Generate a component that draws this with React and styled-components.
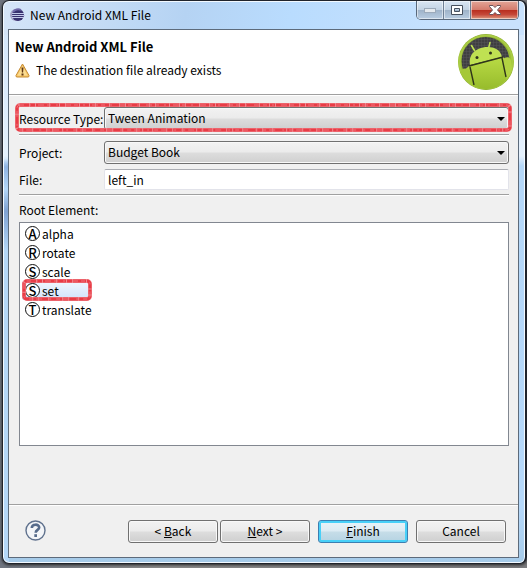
import React, { useState } from "react";
import styled, { createGlobalStyle, css } from "styled-components";

const GlobalStyle = createGlobalStyle`
  * {
    box-sizing: border-box;
  }

  body {
    margin: 0;
    background: linear-gradient(to right, #6f7580, #8b8b8b 30%, #7b7b7e);
    color: #000;
    font-family: "Noto Sans CJK KR", "Open Sans", sans-serif;
    font-size: 12px;
    line-height: 18px;
  }

  button,
  input,
  select {
    font: inherit;
    color: inherit;
  }
`;

const Page = styled.div`
  min-height: 100vh;
  padding: 0 0 4px 2px;
  display: flex;
`;

const Window = styled.div`
  flex: 1;
  min-width: 0;
  display: flex;
  flex-direction: column;
  padding: 0 6px 5px 5px;
  border: 1px solid #20242c;
  border-right-width: 2px;
  border-radius: 7px;
  background:
    linear-gradient(
      to bottom,
      transparent 158px,
      #8fb3e2 166px,
      #b4d7f8 188px,
      #7fa2d2 210px,
      #b4d7f8 250px
    ) 0 0 / 6px 100% no-repeat,
    linear-gradient(100deg, #d5e5f8 0, #b5d3f3 35%, #b9dcfe 55%, #c9e2fd 90%) 0 0 / 100% 34px no-repeat,
    linear-gradient(to bottom, #cfe4fb 0, #e4f0fc 155px, #b4d7f8 165px, #b5d8fa 90%, #a6cbe9 100%);
  box-shadow:
    inset 0 0 0 1px #f2f9ff,
    0 1px 3px #222;
`;

const TitleBar = styled.div`
  height: 28px;
  flex: none;
  display: flex;
  align-items: center;
  gap: 5px;
  padding-left: 2px;
`;

const Title = styled.h1`
  flex: 1;
  margin: 0;
  font-size: 12px;
  font-weight: 400;
  white-space: nowrap;
`;

const WindowButtons = styled.div`
  align-self: flex-start;
  display: flex;
  height: 19px;
  border: 1px solid #59687b;
  border-top: 0;
  border-radius: 0 0 5px 5px;
  overflow: hidden;
`;

const WindowButton = styled.button`
  width: ${({ $wide }) => ($wide ? "47px" : "27px")};
  display: flex;
  align-items: center;
  justify-content: center;
  padding: 0;
  border: 0;
  border-right: ${({ $wide }) => ($wide ? "0" : "1px solid #6e7f94")};
  background: ${({ $wide }) =>
    $wide
      ? "linear-gradient(#e3a698 0, #d57c6d 48%, #b92f20 52%, #c54839 75%, #de9a80 100%)"
      : "linear-gradient(#d9e6f3 0, #c3d3e4 48%, #9fb3c9 52%, #b9cde2 100%)"};
  box-shadow: inset 0 0 0 1px rgba(255, 255, 255, 0.5);
`;

const Client = styled.form`
  flex: 1;
  display: flex;
  flex-direction: column;
  border: 1px solid #5d6b7b;
  background: #f0f0f0;
`;

const Header = styled.header`
  height: 65px;
  display: flex;
  justify-content: space-between;
  padding: 3px 3px 0 6px;
  border-bottom: 1px solid #a0a0a0;
  box-shadow: 0 1px 0 #fff;
  background: #fff;
`;

const HeaderText = styled.div`
  padding-top: 5px;
`;

const Heading = styled.h2`
  margin: 0 0 5px;
  font-size: 13px;
  line-height: 18px;
  font-weight: 700;
`;

const Message = styled.p`
  display: flex;
  align-items: center;
  gap: 6px;
  margin: 0;
`;

const Body = styled.div`
  flex: 1;
  display: flex;
  flex-direction: column;
  padding: 12px 9px 58px 10px;
`;

const Field = styled.div`
  position: relative;
  display: grid;
  grid-template-columns: 85px 1fr;
  align-items: center;
  white-space: nowrap;
`;

const Separator = styled.hr`
  width: 100%;
  height: 2px;
  margin: 4px 0 5px;
  border: 0;
  border-top: 1px solid #a0a0a0;
  border-bottom: 1px solid #fff;
`;

const SelectBox = styled.div`
  position: relative;

  svg {
    position: absolute;
    right: 4px;
    top: 10px;
    pointer-events: none;
  }
`;

const Select = styled.select`
  display: block;
  width: 100%;
  height: 23px;
  padding: 0 20px 1px 3px;
  appearance: none;
  border: 1px solid #707070;
  border-radius: 3px;
  background: linear-gradient(#f2f2f2 0, #ebebeb 48%, #dddddd 52%, #cfcfcf 100%);
  box-shadow: inset 0 0 0 1px #f8f8f8;
`;

const TextInput = styled.input`
  width: 100%;
  height: 21px;
  padding: 0 3px;
  border: 1px solid #e2e3ea;
  border-top-color: #abadb3;
  border-radius: 2px;
  background: #fff;
`;

const Gap = styled.div`
  height: 5px;
`;

const ListLabel = styled.span`
  margin-bottom: 3px;
`;

const List = styled.ul`
  flex: 1;
  margin: 0;
  padding: 1px 2px;
  list-style: none;
  border: 1px solid #828790;
  background: #fff;
`;

const Item = styled.li`
  display: flex;
`;

const ItemButton = styled.button`
  position: relative;
  display: flex;
  align-items: center;
  gap: 2px;
  height: 19px;
  min-width: 68px;
  padding: 0 2px;
  border: 1px solid transparent;
  border-radius: 2px;
  background: transparent;
  line-height: 17px;

  ${({ $selected }) =>
    $selected &&
    css`
      border-color: #a8c6ea;
      background: linear-gradient(#eff6fe, #d2e4fb);
    `}
`;

const LetterIcon = styled.span`
  width: 15px;
  height: 15px;
  display: flex;
  align-items: center;
  justify-content: center;
  border: 1px solid #111;
  border-radius: 50%;
  background: #fff;
  font-size: 13px;
  font-weight: 500;
  line-height: 13px;
`;

const Marker = styled.svg`
  position: absolute;
  top: ${({ $wide }) => ($wide ? "-4px" : "-3px")};
  left: ${({ $wide }) => ($wide ? "-4px" : "-1px")};
  width: calc(100% + ${({ $wide }) => ($wide ? "7px" : "4px")});
  height: calc(100% + ${({ $wide }) => ($wide ? "6px" : "5px")});
  overflow: visible;
  pointer-events: none;

  rect {
    x: 2px;
    y: 2px;
    width: calc(100% - 4px);
    height: calc(100% - 4px);
    fill: none;
  }
`;

const Footer = styled.footer`
  height: 53px;
  display: flex;
  align-items: center;
  padding: 0 12px 0 16px;
  border-top: 1px solid #a0a0a0;
  box-shadow: inset 0 1px 0 #fff;
`;

const HelpButton = styled.button`
  display: flex;
  margin-right: auto;
  padding: 0 0 2px;
  border: 0;
  background: none;
`;

const ButtonPair = styled.div`
  display: flex;
  gap: 2px;
`;

const ButtonRow = styled.div`
  display: flex;
  gap: 8px;
`;

const Button = styled.button`
  width: 90px;
  height: 23px;
  padding: 0;
  border: 1px solid ${({ $primary }) => ($primary ? "#3c7fb1" : "#707070")};
  border-radius: 3px;
  line-height: 20px;
  background: ${({ $primary }) =>
    $primary
      ? "linear-gradient(#e9f3f9 0, #dcebf3 48%, #c6dde8 52%, #b5d3e2 100%)"
      : "linear-gradient(#f2f2f2 0, #ebebeb 48%, #dddddd 52%, #cfcfcf 100%)"};
  box-shadow: inset 0 0 0 ${({ $primary }) => ($primary ? "2px #48d0f8" : "1px #f8f8f8")};
`;

const EclipseIcon = () => (
  <svg width="15" height="14" viewBox="0 0 15 14" aria-hidden="true">
    <circle cx="6" cy="7" r="6" fill="#a6a3c8" />
    <circle cx="8" cy="7" r="6" fill="#38306f" />
    <path d="M3 4a6 6 0 0 1 8-2" stroke="#6f68a8" strokeWidth="2" fill="none" />
    <path d="M2 5.5h12M2 7.5h13M2 9.5h12" stroke="#c3c8ea" strokeWidth="1" />
  </svg>
);

const WarningIcon = () => (
  <svg width="15" height="15" viewBox="0 0 15 15" aria-hidden="true">
    <path
      d="M7.5 1 14 12.5q.3 1.5-1 1.5H2q-1.3 0-1-1.5Z"
      fill="#f8c766"
      stroke="#c58a32"
      strokeLinejoin="round"
    />
    <path d="M7.5 3 12.5 12.5h-10Z" fill="#fbdc91" />
    <path d="M6.5 4.5h2l-.4 5H6.9ZM6.5 10.5h2v2h-2z" fill="#5f3512" />
  </svg>
);

const AndroidBadge = () => (
  <svg width="58" height="58" viewBox="0 0 58 58" aria-hidden="true">
    <defs>
      <linearGradient id="rim" x1="0" y1="0" x2="0" y2="1">
        <stop offset="0" stopColor="#88a72c" />
        <stop offset="0.5" stopColor="#a0c534" />
        <stop offset="1" stopColor="#7d9e22" />
      </linearGradient>
      <linearGradient id="robot" x1="0" y1="0" x2="0" y2="1">
        <stop offset="0" stopColor="#b9db45" />
        <stop offset="1" stopColor="#93b829" />
      </linearGradient>
      <pattern id="mesh" width="3" height="3" patternUnits="userSpaceOnUse">
        <rect width="3" height="3" fill="#3f3f41" />
        <path d="M0 0h3M0 0v3" stroke="#555557" strokeWidth="1" />
      </pattern>
      <clipPath id="disc">
        <circle cx="29" cy="29" r="27" />
      </clipPath>
    </defs>
    <circle cx="29" cy="29" r="28" fill="url(#rim)" />
    <circle cx="29" cy="29" r="26.5" fill="none" stroke="#a9cb45" strokeWidth="2" />
    <circle cx="28.500" cy="28" r="24" fill="url(#mesh)" />
    <g clipPath="url(#disc)">
      <path d="M12 33 46 24 54 34 56 60H2V42Z" fill="url(#robot)" />
      <path d="M13 32C11 22 18 16 26 14.500S43 15 45 24Z" fill="#bfe152" />
      <path
        d="m14.500 12.500 3 5M33 9.500l-1.500 6"
        stroke="#bfe152"
        strokeWidth="1.600"
        strokeLinecap="round"
      />
      <path d="M4 39q0-3.500 4-3.500t5 3L17 60H4Z" fill="#a5c838" />
      <path d="M46 29q-1-3.500 3-4.500t5 3L57 48l-6 4Z" fill="#b2d342" />
      <path d="m12 33 34-9M13 34l4 18M45 25l4 19" stroke="#2f351a" strokeWidth="1.400" />
      <path d="M4 42c4 10 14 15 25 15s21-5 25-15" stroke="#89ac27" strokeWidth="2" fill="none" />
    </g>
    <circle cx="20" cy="24.500" r="1.500" fill="#30351c" />
    <circle cx="33.500" cy="20" r="1.500" fill="#30351c" />
  </svg>
);

const Arrow = () => (
  <svg width="8" height="4" viewBox="0 0 8 4" aria-hidden="true">
    <path d="M0 0h8L4 4Z" />
  </svg>
);

const HelpIcon = () => (
  <svg width="21" height="21" viewBox="0 0 21 21" aria-hidden="true">
    <circle cx="10.5" cy="10.5" r="9.5" fill="#f3f5f8" stroke="#5f718d" strokeWidth="1.4" />
    <path
      d="M6.800 8c0-4.500 7.400-4.200 7.400-.5 0 2.500-3.500 2.300-3.500 5.200"
      fill="none"
      stroke="#566b8b"
      strokeWidth="2.6"
    />
    <path d="M9.300 14.200H12V17H9.300z" fill="#566b8b" />
  </svg>
);

// Rough felt-pen outline around a control
const Highlight = ({ wide }) => (
  <Marker $wide={wide} aria-hidden="true">
    <rect rx="3" stroke="#f08a90" strokeWidth="4" />
    <rect rx="3" stroke="#e83c46" strokeWidth="3" strokeDasharray="9 1 5 1 13 1" />
    <rect rx="3" stroke="#f0737a" strokeWidth="1" strokeDasharray="4 5 2 7 6 3" />
  </Marker>
);

const elements = ["alpha", "rotate", "scale", "set", "translate"];

const App = () => {
  const [selected, setSelected] = useState("set");
  const [fileName, setFileName] = useState("left_in");

  return (
    <Page>
      <GlobalStyle />
      <Window>
        <TitleBar>
          <EclipseIcon />
          <Title>New Android XML File</Title>
          <WindowButtons>
            <WindowButton type="button" aria-label="Minimize">
              <svg width="12" height="5">
                <rect x="0.5" y="0.5" width="11" height="4" fill="#e4e9ee" stroke="#9caaba" />
              </svg>
            </WindowButton>
            <WindowButton type="button" aria-label="Maximize">
              <svg width="12" height="10">
                <path
                  d="M.5.5h11v9H.5ZM3.5 3.5h5v3h-5Z"
                  fill="#fff"
                  fillRule="evenodd"
                  stroke="#47505e"
                />
              </svg>
            </WindowButton>
            <WindowButton type="button" aria-label="Close" $wide>
              <svg width="12" height="10" viewBox="0 0 12 10">
                <path
                  d="M.5.5h3.500L6 2.500 8 .5h3.500v1L8.500 5l3 3.500v1H8L6 7.500 4 9.500H.5v-1l3-3.500-3-3.500Z"
                  fill="#fff"
                  stroke="#6b5358"
                />
              </svg>
            </WindowButton>
          </WindowButtons>
        </TitleBar>

        <Client onSubmit={(e) => e.preventDefault()}>
          <Header>
            <HeaderText>
              <Heading>New Android XML File</Heading>
              <Message>
                <WarningIcon />
                The destination file already exists
              </Message>
            </HeaderText>
            <AndroidBadge />
          </Header>

          <Body>
            <Field>
              <label htmlFor="resource-type">Resource Type:</label>
              <SelectBox>
                <Select id="resource-type">
                  <option>Tween Animation</option>
                </Select>
                <Arrow />
              </SelectBox>
              <Highlight wide />
            </Field>
            <Separator />
            <Field>
              <label htmlFor="project">Project:</label>
              <SelectBox>
                <Select id="project">
                  <option>Budget Book</option>
                </Select>
                <Arrow />
              </SelectBox>
            </Field>
            <Gap />
            <Field>
              <label htmlFor="file">File:</label>
              <TextInput
                id="file"
                value={fileName}
                onChange={(e) => setFileName(e.target.value)}
              />
            </Field>
            <Separator />
            <ListLabel id="root-element">Root Element:</ListLabel>
            <List aria-labelledby="root-element">
              {elements.map((name) => (
                <Item key={name}>
                  <ItemButton
                    type="button"
                    $selected={name === selected}
                    aria-pressed={name === selected}
                    onClick={() => setSelected(name)}
                  >
                    <LetterIcon aria-hidden="true">{name[0].toUpperCase()}</LetterIcon>
                    {name}
                    {name === selected && <Highlight />}
                  </ItemButton>
                </Item>
              ))}
            </List>
          </Body>

          <Footer>
            <HelpButton type="button" aria-label="Help">
              <HelpIcon />
            </HelpButton>
            <ButtonRow>
              <ButtonPair>
                <Button type="button">
                  &lt; <u>B</u>ack
                </Button>
                <Button type="button">
                  <u>N</u>ext &gt;
                </Button>
              </ButtonPair>
              <Button type="submit" $primary>
                <u>F</u>inish
              </Button>
              <Button type="button">Cancel</Button>
            </ButtonRow>
          </Footer>
        </Client>
      </Window>
    </Page>
  );
};

export default App;
